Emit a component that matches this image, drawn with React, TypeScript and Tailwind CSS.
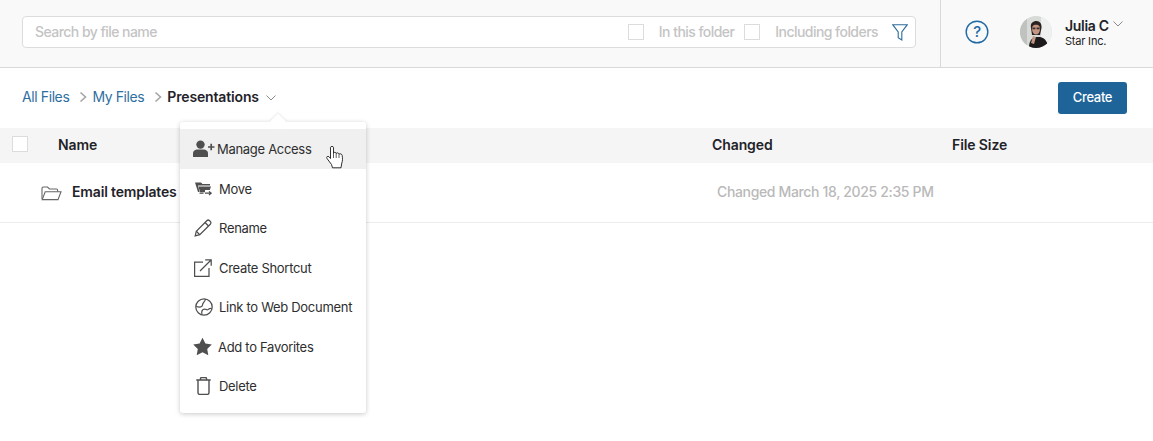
import React from "react";

const ic = "#4f4f4f";

function Check({ className = "" }: { className?: string }) {
  return <span className={"block w-4 h-4 border border-[#dcdcdc] bg-white " + className} />;
}

function Sep() {
  return (
    <svg width="8" height="12" viewBox="0 0 8 12" className="ml-[9.5px] mr-[5.5px] mt-[1px]">
      <path d="M1.5 1.5 L6.5 6 L1.5 10.5" fill="none" stroke="#a5a5a5" strokeWidth="1.6" />
    </svg>
  );
}

function Chevron({ color = "#8a8a8a" }: { color?: string }) {
  return (
    <svg width="10" height="6" viewBox="0 0 10 6">
      <path d="M0.5 0.5 L5 5 L9.5 0.5" fill="none" stroke={color} strokeWidth="1" />
    </svg>
  );
}

function Avatar() {
  return (
    <svg width="32" height="32" viewBox="0 0 32 32" className="rounded-full">
      <rect width="32" height="32" fill="#d8dad8" />
      <rect x="21" width="11" height="32" fill="#eef0f0" />
      <rect x="0" width="7" height="32" fill="#bfc2bf" />
      <path d="M9 32 C9 25 12 21 16 21 L20 21 C25 22 28 26 28 32 Z" fill="#1d1a1b" />
      <path d="M11 12 C10 7 13 5 16.5 5 C20 5 22 8 21.5 12 L20 19 L12 19 Z" fill="#2a2322" />
      <ellipse cx="16" cy="13" rx="4" ry="5.5" fill="#c49681" />
      <path d="M12 10.5 C14 8 18 8 20 10.5 L20 8.5 C18 6 14 6 12 8.5 Z" fill="#2a2322" />
      <rect x="12.4" y="11.5" width="3" height="1.8" fill="#3a3030" />
      <rect x="16.6" y="11.5" width="3" height="1.8" fill="#3a3030" />
      <path d="M11 27 L13 20 L16 21 L14 28 Z" fill="#c49681" />
    </svg>
  );
}

function MenuIcon({ name }: { name: string }) {
  const s = { fill: "none", stroke: ic, strokeWidth: 1.25 } as const;
  switch (name) {
    case "access":
      return (
        <svg width="22" height="18" viewBox="0 0 22 18">
          <circle cx="7.5" cy="4.6" r="4.2" fill={ic} />
          <path d="M0 17 L0 13.5 C0 10.5 2.5 9.5 4.5 9.5 L10.5 9.5 C12.5 9.5 15 10.5 15 13.5 L15 17 Z" fill={ic} />
          <path d="M15 7 H21.5 M18.2 3.8 V10.2" stroke={ic} strokeWidth="1.7" fill="none" />
        </svg>
      );
    case "move":
      return (
        <svg width="17" height="14" viewBox="0 0 17 14">
          <path d="M0 0.5 H6 L7.5 2 H15 V3.5 H3 L4.5 10 H3 Z" fill={ic} />
          <path d="M3.5 4.5 H16 L14.8 8 H10 V10.3 H5 Z" fill={ic} />
          <path d="M10 11.2 H15.8 M14 9.4 L16.2 11.2 L14 13" stroke={ic} strokeWidth="1.2" fill="none" />
          <path d="M4.5 11.2 H8.5" stroke={ic} strokeWidth="1.2" />
        </svg>
      );
    case "rename":
      return (
        <svg width="18" height="18" viewBox="0 0 18 18">
          <path d="M1.2 16.8 L2.3 12.2 L12.8 1.7 C13.6 0.9 14.8 0.9 15.6 1.7 L16.3 2.4 C17.1 3.2 17.1 4.4 16.3 5.2 L5.8 15.7 Z" {...s} />
          <path d="M11 3.5 L14.5 7 M2.3 12.2 L5.8 15.7" {...s} />
        </svg>
      );
    case "shortcut":
      return (
        <svg width="18" height="18" viewBox="0 0 18 18">
          <path d="M9 3 H0.6 V17.4 H15 V9" {...s} />
          <path d="M6 12 L16.8 1.2 M11.2 0.8 H17.2 V6.8" {...s} />
        </svg>
      );
    case "link":
      return (
        <svg width="18" height="18" viewBox="0 0 18 18">
          <circle cx="9" cy="9" r="8.2" {...s} />
          <path d="M10.5 1 C10 4 7.5 5 7.5 7 C7.5 9 5 9.5 1.2 8.5 M7 16.5 C6 13.5 7.5 11 9.5 11 C11.5 11 11.5 12.5 13 11.5 C14 10.8 15 10 16.8 10.5" {...s} />
        </svg>
      );
    case "star":
      return (
        <svg width="20" height="19" viewBox="0 0 19 18">
          <path d="M9.5 0.2 L12.4 6 L18.8 6.9 L14.2 11.4 L15.3 17.8 L9.5 14.8 L3.7 17.8 L4.8 11.4 L0.2 6.9 L6.6 6 Z" fill={ic} />
        </svg>
      );
    default:
      return (
        <svg width="15" height="18" viewBox="0 0 15 18">
          <path d="M0.3 3 H14.7 M4.5 3 V1.6 C4.5 1 5 0.6 5.5 0.6 H9.5 C10 0.6 10.5 1 10.5 1.6 V3" fill="none" stroke={ic} strokeWidth="1.4" />
          <path d="M2 3 V15.5 C2 16.6 2.8 17.4 3.8 17.4 H11.2 C12.2 17.4 13 16.6 13 15.5 V3" fill="none" stroke={ic} strokeWidth="1.4" />
        </svg>
      );
  }
}

const items = [
  { icon: "access", label: "Manage Access", slot: "w-[24px]", ml: "ml-[12px]", gap: "ml-[1px]", h: "h-[40px]" },
  { icon: "move", label: "Move", slot: "w-[17px]", ml: "ml-[15px]", gap: "ml-[7px]", h: "h-[39px]" },
  { icon: "rename", label: "Rename", slot: "w-[18px]", ml: "ml-[14px]", gap: "ml-[7px]", h: "h-[40px]" },
  { icon: "shortcut", label: "Create Shortcut", slot: "w-[18px]", ml: "ml-[14px]", gap: "ml-[7px]", h: "h-[39px]" },
  { icon: "link", label: "Link to Web Document", slot: "w-[18px]", ml: "ml-[15px]", gap: "ml-[6px]", h: "h-[40px]" },
  { icon: "star", label: "Add to Favorites", slot: "w-[19px]", ml: "ml-[13px]", gap: "ml-[6px]", h: "h-[39px]" },
  { icon: "delete", label: "Delete", slot: "w-[15px]", ml: "ml-[16px]", gap: "ml-[8px]", h: "h-[40px]" },
];

export default function App() {
  return (
    <div className="relative w-[1153px] h-[441px] overflow-hidden bg-white font-['Inter','Liberation_Sans',sans-serif] text-[14px] tracking-[-0.35px] text-[#1f2329]">
      <header className="flex h-[68px] bg-[#f9f9f9] border-b border-[#d9d9d9]">
        <div className="flex-1 pl-[22px] pr-[24px] pt-[16px]">
          <div className="flex items-center h-[32px] bg-white border border-[#dcdcdc] rounded-[4px] pl-[12px] pr-[7px]">
            <span className="flex-1 mb-[1px] font-medium tracking-[-0.55px] text-[#c4c4c4]">Search by file name</span>
            <Check />
            <span className="ml-[15px] mb-[1px] font-medium tracking-[-0.55px] text-[#c4c4c4]">In this folder</span>
            <Check className="ml-[10px]" />
            <span className="ml-[15px] mb-[1px] font-medium tracking-[-0.55px] text-[#c4c4c4]">Including folders</span>
            <svg width="16" height="17" viewBox="0 0 16 17" className="ml-[14px]">
              <path d="M0.7 0.7 H15.3 L9.8 8 V16 L6.2 13.8 V8 Z" fill="none" stroke="#2c6c9c" strokeWidth="1.1" />
            </svg>
          </div>
        </div>
        <div className="flex w-[213px] border-l border-[#d9d9d9] pt-[16px] pl-[24px]">
          <svg width="24" height="24" viewBox="0 0 24 24" className="mt-[4px] shrink-0">
            <circle cx="12" cy="12" r="10.8" fill="none" stroke="#1f6aa5" strokeWidth="1.4" />
            <text x="12" y="17" textAnchor="middle" fontSize="15" fontWeight="500" fill="#1f6aa5" fontFamily="Inter">?</text>
          </svg>
          <div className="ml-[31px] shrink-0"><Avatar /></div>
          <div className="ml-[13px] shrink-0">
            <div className="flex items-center h-[18px] text-[14px] font-semibold tracking-[-0.3px]">
              <span>Julia C</span>
              <span className="ml-[4px] mb-[2px]"><Chevron /></span>
            </div>
            <div className="text-[11px] leading-[14px] tracking-[-0.2px] text-[#222]">Star Inc.</div>
          </div>
        </div>
      </header>

      <div className="flex items-center h-[60px] pl-[22px] pr-[26px]">
        <div className="flex items-center mb-[4px]">
          <span className="text-[#2f6f9f] tracking-[-0.4px]">All Files</span>
          <Sep />
          <span className="text-[#2f6f9f] tracking-[-0.4px]">My Files</span>
          <Sep />
          <span className="font-semibold tracking-[-0.15px]">Presentations</span>
          <span className="ml-[7px] mt-[3px]"><Chevron /></span>
        </div>
        <button className="ml-auto w-[69px] h-[32px] rounded-[3px] bg-[#1f6499] text-white text-[13px] font-medium">Create</button>
      </div>

      <div className="flex items-center h-[35px] bg-[#f5f5f5] font-semibold tracking-[-0.1px]">
        <Check className="ml-[12px] mb-[4px]" />
        <span className="ml-[30px] w-[654px] mb-[2px]">Name</span>
        <span className="w-[240px] mb-[2px]">Changed</span>
        <span className="mb-[2px]">File Size</span>
      </div>
      <div className="flex items-center h-[60px] border-b border-[#ececec]">
        <svg width="21" height="15" viewBox="0 0 21 15" className="ml-[41px] mt-[2px]">
          <path d="M1 13 V2.2 C1 1.4 1.5 1 2.2 1 H6.5 L8.5 3 H15.5 C16.2 3 16.6 3.5 16.6 4.2 V5.6" fill="none" stroke="#666" strokeWidth="1.1" />
          <path d="M1.2 13.6 L4.2 5.8 H20 L17 13.6 Z" fill="none" stroke="#666" strokeWidth="1.1" />
        </svg>
        <span className="ml-[10px] w-[645px] mb-[2px] font-semibold tracking-[-0.15px]">Email templates</span>
        <span className="mb-[2px] text-[#b9b9b9] font-medium">Changed March 18, 2025 2:35 PM</span>
      </div>

      <div className="absolute left-[180px] top-[122px] w-[186px] h-[291px] bg-white rounded-[3px] shadow-[0_1px_5px_rgba(0,0,0,0.22)] pt-[7px]">
        <span className="absolute left-[92px] top-[-6px] w-[12px] h-[12px] rotate-45 bg-white shadow-[-1px_-1px_2px_rgba(0,0,0,0.07)]" />
        <div className="relative">
          {items.map((it, i) => (
            <div key={it.label} className={"flex items-center text-[13px] tracking-[-0.3px] text-[#2e2e2e] " + it.h + (i === 0 ? " bg-[#f0f0f0]" : "")}>
              <span className={"flex justify-center " + it.slot + " " + it.ml}><MenuIcon name={it.icon} /></span>
              <span className={it.gap + " mt-[2px]"}>{it.label}</span>
            </div>
          ))}
        </div>
      </div>

      <svg width="18" height="23" viewBox="0 0 18 23" className="absolute left-[326px] top-[146px]">
        <path d="M4.5 1.3 C4.5 0.2 7.5 0.2 7.5 1.3 V7 C8 6 10 6 10.2 7.5 C10.7 6.5 12.7 6.7 13 8.2 C13.5 7.5 16 7.6 16.2 9.5 C16.7 12.5 16.6 15 15.8 17 L15 21.8 H6.5 L5.5 18.5 L1 12.5 C0 11 1.8 9.5 3 10.8 L4.5 12.5 Z" fill="#fff" stroke="#1a1a1a" strokeWidth="0.9" />
        <path d="M7.5 7 V12 M10.2 7.5 V12 M13 8.2 V12" stroke="#1a1a1a" strokeWidth="0.7" />
      </svg>
    </div>
  );
}
